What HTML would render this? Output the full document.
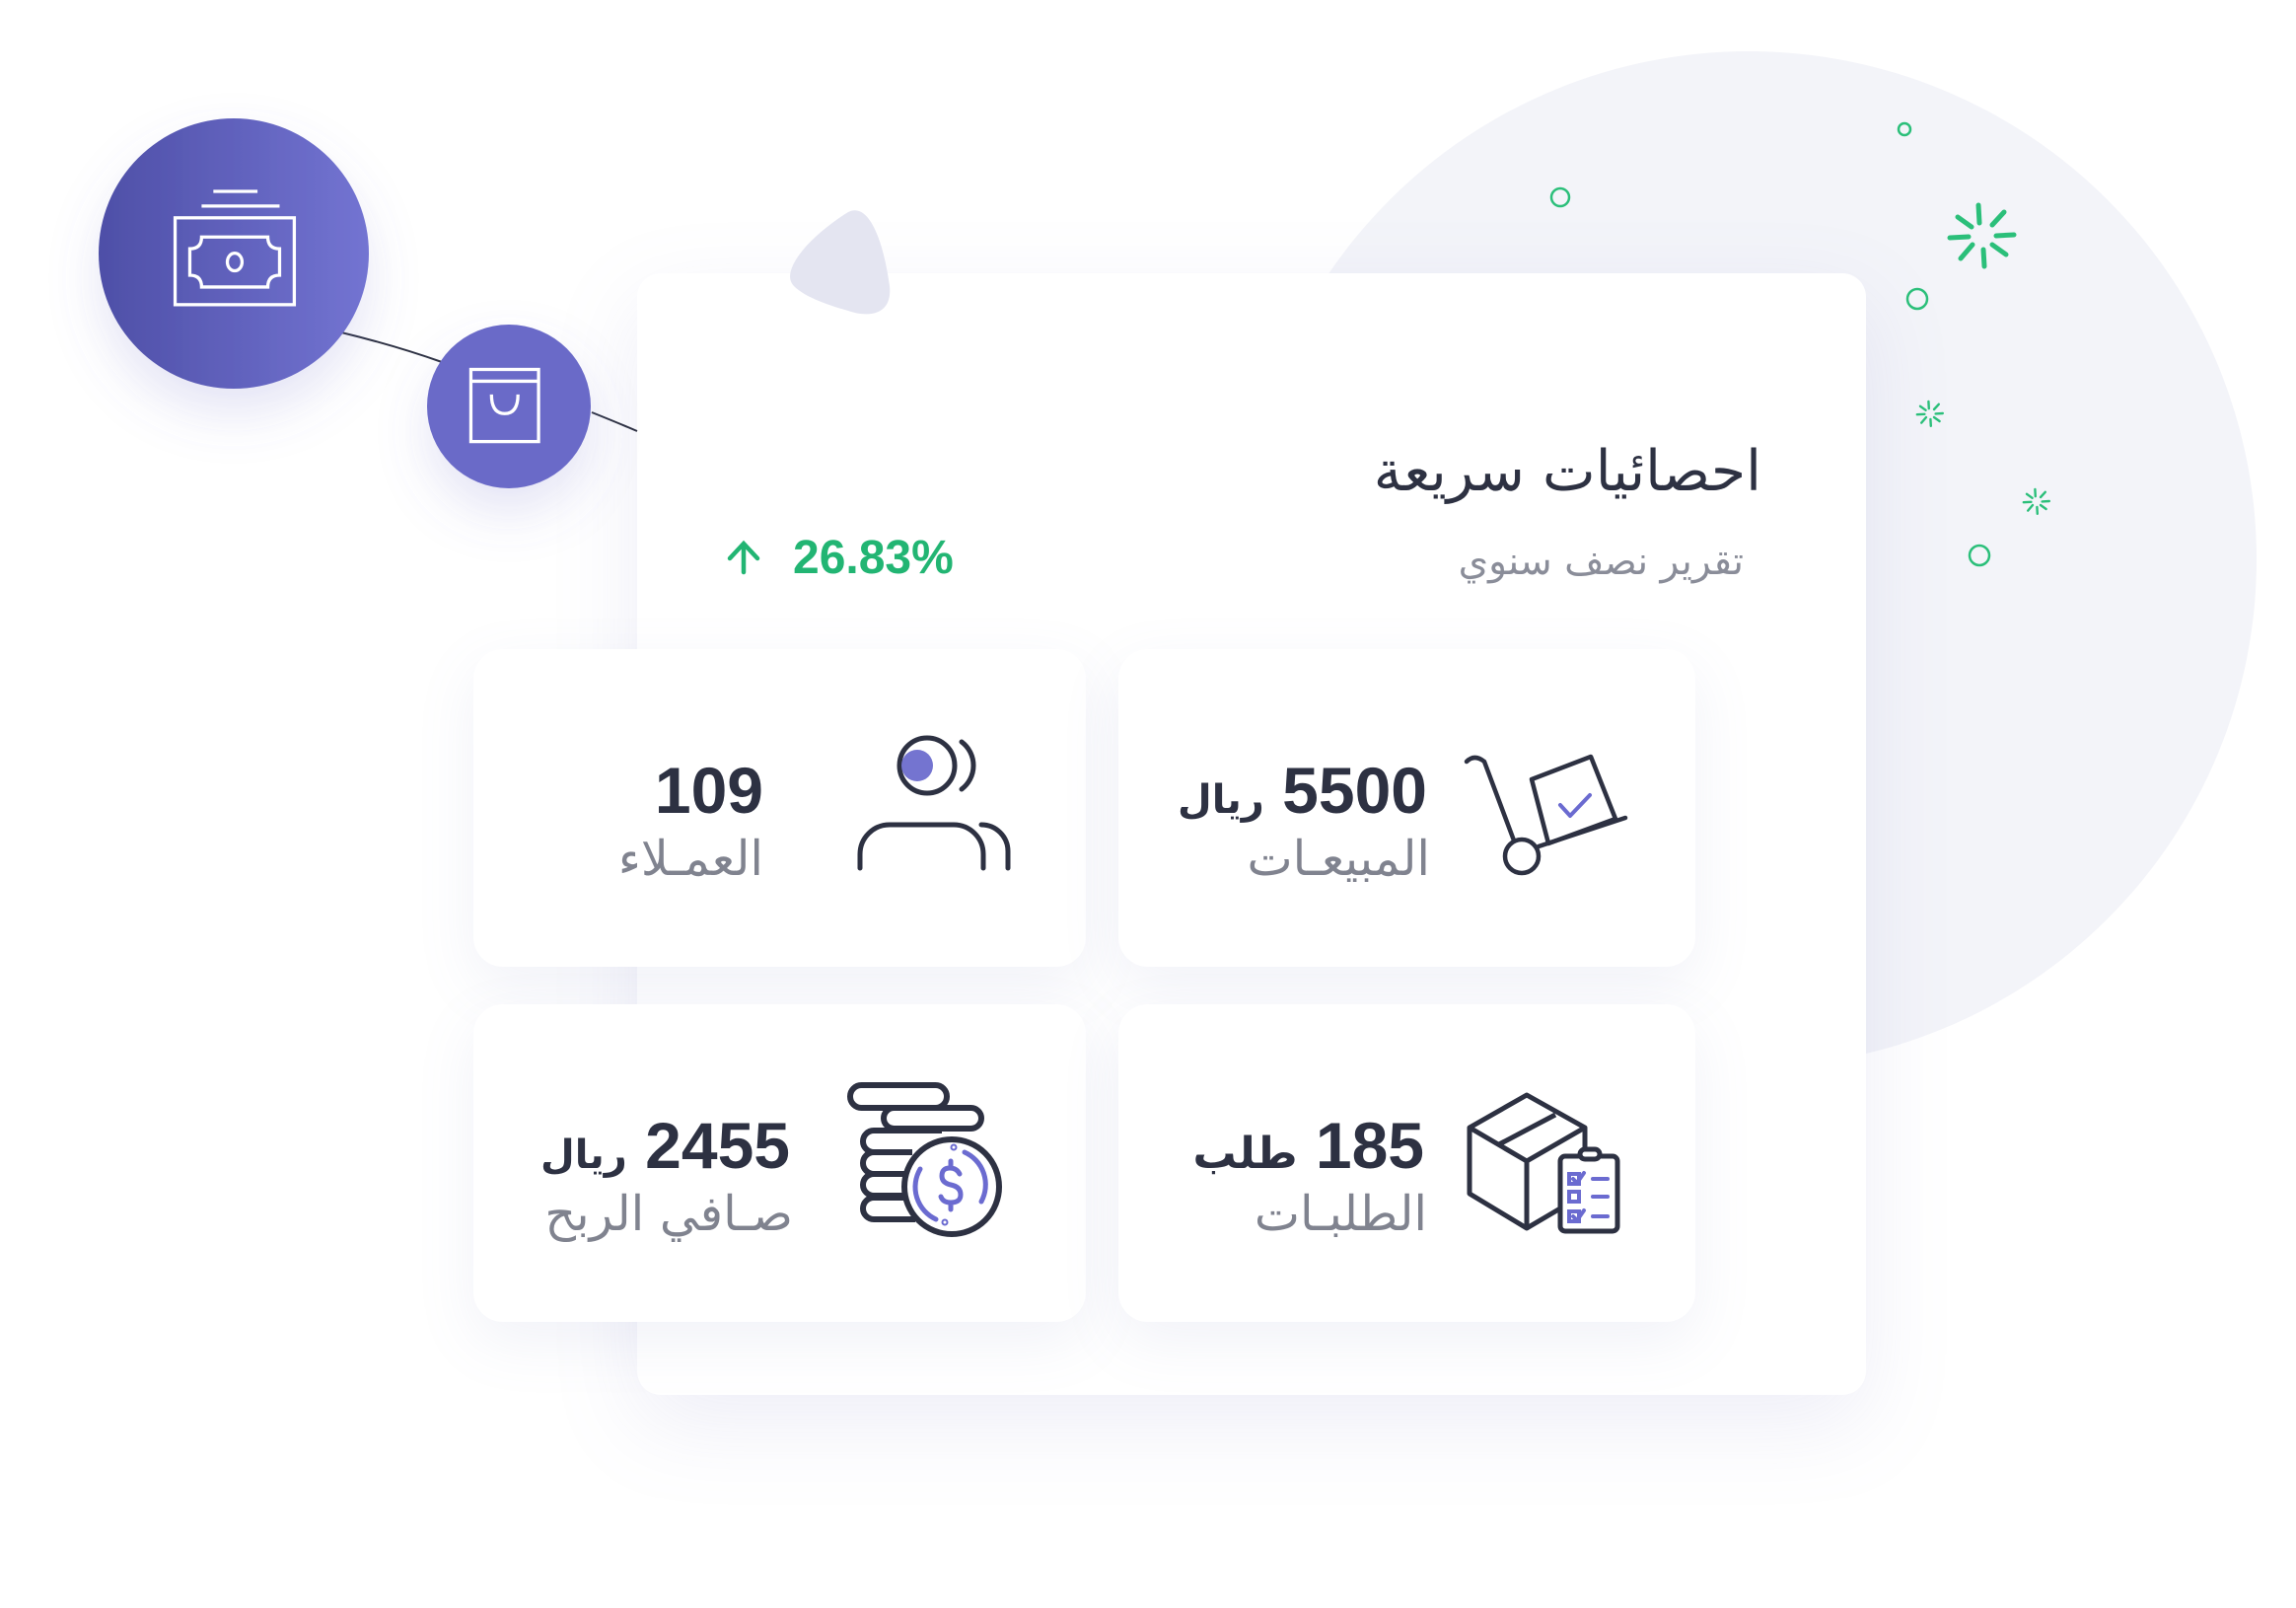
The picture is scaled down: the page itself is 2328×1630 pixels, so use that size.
<!DOCTYPE html>
<html><head><meta charset="utf-8"><style>
html,body{margin:0;padding:0;background:#fff;}
body{width:2328px;height:1630px;position:relative;overflow:hidden;font-family:"DejaVu Sans","Liberation Sans",sans-serif;}
.abs{position:absolute;}
.card{position:absolute;background:#fff;border-radius:24px;box-shadow:0 30px 90px rgba(120,125,190,0.13);}
.sc{position:absolute;background:#fff;border-radius:30px;box-shadow:0 20px 60px rgba(120,125,190,0.10);}
.t{position:absolute;direction:rtl;white-space:nowrap;line-height:1;}
.num{font-family:"Liberation Sans","DejaVu Sans",sans-serif;font-weight:bold;font-size:66px;color:#2d3142;}
.num span{font-family:"DejaVu Sans",sans-serif;font-size:40px;}
.lab{font-size:49px;color:#80838f;font-weight:300;}
</style></head><body>
<svg class="abs" style="left:0;top:0" width="2328" height="1630">
  <circle cx="1773" cy="567" r="515" fill="#f3f4f9"/>
</svg>
<div class="card" style="left:646px;top:277px;width:1246px;height:1137px;"></div>
<div class="sc" style="left:480px;top:658px;width:621px;height:322px;"></div>
<div class="sc" style="left:1134px;top:658px;width:585px;height:322px;"></div>
<div class="sc" style="left:480px;top:1018px;width:621px;height:322px;"></div>
<div class="sc" style="left:1134px;top:1018px;width:585px;height:322px;"></div>

<div class="t" style="right:542px;top:450px;font-size:57px;color:#2d3142;">احصائيات سريعة</div>
<div class="t" style="right:560px;top:550px;font-size:39px;color:#8a8d99;">تقرير نصف سنوي</div>
<div class="abs" style="left:804px;top:542px;font-family:'Liberation Sans',sans-serif;font-size:48px;font-weight:bold;color:#22b573;line-height:1;">26.83%</div>

<div class="t num" style="right:1554px;top:768px;">109</div>
<div class="t lab" style="right:1554px;top:846px;">العمـلاء</div>
<div class="t num" style="right:881px;top:768px;">5500 <span>ريال</span></div>
<div class="t lab" style="right:878px;top:846px;">المبيعـات</div>
<div class="t num" style="right:1527px;top:1128px;">2455 <span>ريال</span></div>
<div class="t lab" style="right:1524px;top:1206px;">صـافي الربح</div>
<div class="t num" style="right:884px;top:1128px;">185 <span style="font-size:44px">طلب</span></div>
<div class="t lab" style="right:881px;top:1206px;">الطلبـات</div>

<svg class="abs" style="left:0;top:0" width="2328" height="1630">
  <defs>
    <linearGradient id="g1" x1="0" x2="1" y1="0" y2="0">
      <stop offset="0" stop-color="#4e4fa7"/><stop offset="1" stop-color="#7374d2"/>
    </linearGradient>
    <filter id="sh" x="-50%" y="-50%" width="200%" height="200%"><feDropShadow dx="0" dy="25" stdDeviation="25" flood-color="#6a6ac8" flood-opacity="0.18"/></filter>
  </defs>
  <g fill="none" stroke="#2d3142" stroke-width="2">
    <path d="M346 337 Q400 350 448 367"/>
    <path d="M600 418 Q625 428 646 437"/>
  </g>
  <circle cx="237" cy="257" r="137" fill="url(#g1)" filter="url(#sh)"/>
  <circle cx="516" cy="412" r="83" fill="#6a6ac8" filter="url(#sh)"/>
  <path d="M805 290 C790 275 820 240 860 215 C880 205 895 240 902 290 C905 320 880 322 860 315 C835 308 815 300 805 290Z" fill="#e4e5f1"/>
  <g transform="scale(1.492)" fill="none" stroke="#fff" stroke-width="2.2">
    <line x1="145" y1="130" x2="175" y2="130"/>
    <line x1="137" y1="140" x2="190" y2="140"/>
    <rect x="119" y="148" width="81" height="59"/>
    <path d="M137 161 H182 Q182 169 190 169 V187 Q182 187 182 195 H137 Q137 187 129 187 V169 Q137 169 137 161Z"/>
    <ellipse cx="159.5" cy="178" rx="5" ry="6"/>
    <rect x="320" y="251" width="46" height="49"/>
    <line x1="320" y1="259" x2="366" y2="259"/>
    <path d="M334 268 Q334 281 343 281 Q352 281 352 268"/>
  </g>
  <g stroke="#22b573" stroke-width="4.5" fill="none" stroke-linecap="round">
    <path d="M754 580 V552 M740 566 L754 551 L768 566"/>
  </g>
  <g fill="none" stroke="#2bbf7a" stroke-width="2.5">
    <circle cx="1931" cy="131" r="6"/>
    <circle cx="1582" cy="200" r="9"/>
    <circle cx="1944" cy="303" r="10"/>
    <circle cx="2007" cy="563" r="10"/>
  </g>
  <g stroke="#2bbf7a" stroke-linecap="round" fill="none">
    <g transform="translate(2010,238)" stroke-width="5">
      <line x1="-3" y1="-12" x2="-4" y2="-30"/><line x1="10" y1="-10" x2="22" y2="-23"/>
      <line x1="14" y1="1" x2="32" y2="0"/><line x1="10" y1="10" x2="24" y2="20"/>
      <line x1="1" y1="15" x2="2" y2="32"/><line x1="-10" y1="10" x2="-22" y2="24"/>
      <line x1="-14" y1="2" x2="-33" y2="3"/><line x1="-11" y1="-8" x2="-25" y2="-18"/>
    </g>
    <g transform="translate(1957,419) scale(0.4)" stroke-width="6">
      <line x1="-3" y1="-12" x2="-4" y2="-30"/><line x1="10" y1="-10" x2="22" y2="-23"/>
      <line x1="14" y1="1" x2="32" y2="0"/><line x1="10" y1="10" x2="24" y2="20"/>
      <line x1="1" y1="15" x2="2" y2="32"/><line x1="-10" y1="10" x2="-22" y2="24"/>
      <line x1="-14" y1="2" x2="-33" y2="3"/><line x1="-11" y1="-8" x2="-25" y2="-18"/>
    </g>
    <g transform="translate(2065,508) scale(0.4)" stroke-width="6">
      <line x1="-3" y1="-12" x2="-4" y2="-30"/><line x1="10" y1="-10" x2="22" y2="-23"/>
      <line x1="14" y1="1" x2="32" y2="0"/><line x1="10" y1="10" x2="24" y2="20"/>
      <line x1="1" y1="15" x2="2" y2="32"/><line x1="-10" y1="10" x2="-22" y2="24"/>
      <line x1="-14" y1="2" x2="-33" y2="3"/><line x1="-11" y1="-8" x2="-25" y2="-18"/>
    </g>
  </g>
  <g fill="none" stroke="#2d3142" stroke-width="5" stroke-linecap="round">
    <circle cx="940" cy="776" r="28"/>
    <path d="M975 752 A30 30 0 0 1 975 800"/>
    <path d="M872 880 V866 A30 30 0 0 1 902 836 H967 A30 30 0 0 1 997 866 V880"/>
    <path d="M995 836 A27 27 0 0 1 1022 863 V880"/>
  </g>
  <circle cx="930" cy="776" r="16" fill="#7474d0"/>
  <g fill="none" stroke="#2d3142" stroke-width="4.5" stroke-linecap="round" stroke-linejoin="round">
    <path d="M1487 772 Q1495 764 1505 772 L1535 852"/>
    <circle cx="1543" cy="868" r="17"/>
    <path d="M1560 858 L1648 829"/>
    <path d="M1553 790 L1613 767 L1638 830 L1570 855 Z"/>
  </g>
  <path d="M1582 816 L1592 827 L1612 806" fill="none" stroke="#6b6bd0" stroke-width="4" stroke-linecap="round" stroke-linejoin="round"/>
  <g fill="none" stroke="#2d3142" stroke-width="6" stroke-linejoin="round">
    <rect x="862" y="1100" width="98" height="23" rx="11.5"/>
    <rect x="896" y="1123" width="99" height="21" rx="10.5"/>
    <path d="M955 1146 H886 A11 11 0 0 0 886 1168 H925"/>
    <path d="M925 1168 H886 A11 11 0 0 0 886 1190 H918"/>
    <path d="M918 1190 H886 A11 11 0 0 0 886 1212 H918"/>
    <path d="M920 1214 H886 A11 11 0 0 0 886 1236 H928"/>
    <circle cx="965" cy="1203" r="48" fill="#fff"/>
  </g>
  <g fill="none" stroke="#6b6bd0" stroke-width="5" stroke-linecap="round">
    <path d="M978 1168 A36 36 0 0 1 995 1218"/>
    <path d="M949 1236 A36 36 0 0 1 933 1185"/>
    <circle cx="967" cy="1163" r="1"/><circle cx="958" cy="1239" r="1"/>
    <path d="M973 1190 Q970 1184 963 1184 Q955 1184 955 1192 Q955 1199 964 1201 Q974 1203 974 1211 Q974 1219 964 1219 Q956 1219 954 1213 M964 1177 V1184 M964 1219 V1226"/>
  </g>
  <g fill="none" stroke="#2d3142" stroke-width="5" stroke-linejoin="round">
    <path d="M1548 1110 L1490 1143 L1548 1177 L1607 1143 Z"/>
    <path d="M1490 1143 V1210 L1548 1245 V1177"/>
    <path d="M1548 1245 L1582 1225"/>
    <path d="M1607 1143 V1172"/>
    <path d="M1520 1160 L1577 1130"/>
    <rect x="1582" y="1172" width="58" height="76" rx="5" fill="#fff"/>
    <rect x="1602" y="1165" width="20" height="10" rx="5" fill="#fff"/>
  </g>
  <g fill="none" stroke="#6b6bd0" stroke-width="4" stroke-linecap="round">
    <rect x="1591" y="1190" width="10" height="10"/>
    <path d="M1595 1195 L1599 1199 L1606 1189"/>
    <rect x="1591" y="1208" width="10" height="10"/>
    <rect x="1591" y="1228" width="10" height="10"/>
    <path d="M1595 1233 L1599 1237 L1606 1227"/>
    <line x1="1615" y1="1195" x2="1630" y2="1195"/>
    <line x1="1615" y1="1213" x2="1630" y2="1213"/>
    <line x1="1615" y1="1233" x2="1630" y2="1233"/>
  </g>
</svg>
</body></html>
